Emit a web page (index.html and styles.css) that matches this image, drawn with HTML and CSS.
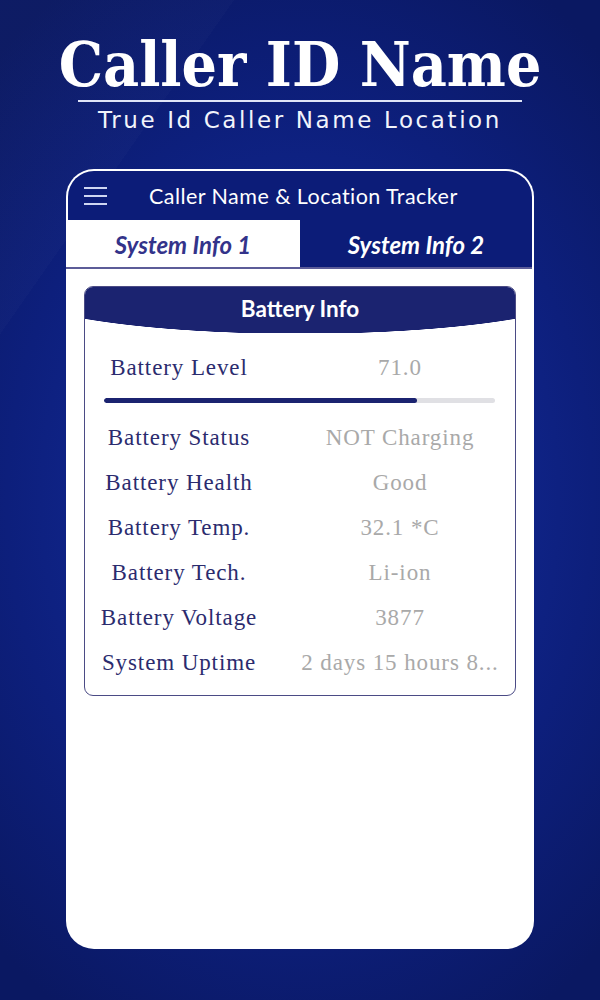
FILE: index.html
```html
<!DOCTYPE html>
<html>
<head>
<meta charset="utf-8">
<link rel="stylesheet" href="styles.css">
</head>
<body>
<div class="screen">
  <header class="hero">
    <h1 class="hero-title">Caller ID Name</h1>
    <div class="hero-rule"></div>
    <p class="hero-sub">True Id Caller Name Location</p>
  </header>

  <section class="card">
    <div class="app-bar">
      <span class="menu-icon"><span></span><span></span><span></span></span>
      <span class="app-title">Caller Name &amp; Location Tracker</span>
    </div>
    <div class="tabs">
      <div class="tab tab-active">System Info 1</div>
      <div class="tab tab-dark">System Info 2</div>
    </div>

    <div class="info-box">
      <div class="info-head">Battery Info</div>
      <div class="row row-first">
        <span class="label">Battery Level</span>
        <span class="value">71.0</span>
      </div>
      <div class="bar"><div class="bar-fill" style="width:80%"></div></div>
      <div class="row"><span class="label">Battery Status</span><span class="value">NOT Charging</span></div>
      <div class="row"><span class="label">Battery Health</span><span class="value">Good</span></div>
      <div class="row"><span class="label">Battery Temp.</span><span class="value">32.1 *C</span></div>
      <div class="row"><span class="label">Battery Tech.</span><span class="value">Li-ion</span></div>
      <div class="row"><span class="label">Battery Voltage</span><span class="value">3877</span></div>
      <div class="row"><span class="label">System Uptime</span><span class="value">2 days 15 hours 8...</span></div>
    </div>
  </section>
</div>
</body>
</html>
```

FILE: styles.css
```css
html, body {
  margin: 0;
  padding: 0;
}
body {
  width: 600px;
  height: 1000px;
  overflow: hidden;
  background:
    linear-gradient(125deg, rgba(255,255,255,0.015) 0 18%, transparent 18% 100%),
    radial-gradient(ellipse 75% 60% at 50% 50%, #16309e 0%, #112790 35%, #0d1f7c 65%, #0a1862 100%);
  font-family: "Lato", "Noto Sans", sans-serif;
}
.screen {
  width: 600px;
  height: 1000px;
  display: flex;
  flex-direction: column;
  align-items: center;
}
.hero {
  display: flex;
  flex-direction: column;
  align-items: center;
  padding-top: 32px;
}
.hero-title {
  margin: 0;
  font-family: "DejaVu Serif Condensed", "DejaVu Serif", serif;
  font-stretch: condensed;
  font-weight: bold;
  font-size: 62px;
  line-height: 66px;
  color: #ffffff;
}
.hero-rule {
  width: 444px;
  height: 2px;
  background: #dfe4f7;
  margin-top: 2px;
}
.hero-sub {
  margin: 4px 0 0;
  font-family: "DejaVu Sans", sans-serif;
  font-size: 23px;
  line-height: 28px;
  letter-spacing: 2.6px;
  color: #f2f4fb;
}
.card {
  margin-top: 35px;
  width: 464px;
  height: 778px;
  padding: 2px 2px 0;
  background: #ffffff;
  border-radius: 28px;
  display: flex;
  flex-direction: column;
}
.app-bar {
  height: 49px;
  background: #0c1c78;
  border-radius: 26px 26px 0 0;
  display: flex;
  align-items: center;
  padding-left: 16px;
}
.menu-icon {
  display: flex;
  flex-direction: column;
  gap: 6px;
  width: 23px;
}
.menu-icon span {
  display: block;
  height: 2px;
  background: #cfd6f2;
}
.app-title {
  margin-left: 42px;
  font-family: "Lato", sans-serif;
  font-size: 21.5px;
  color: #ffffff;
  letter-spacing: 0.45px;
}
.tabs {
  display: grid;
  grid-template-columns: 234px 1fr;
  height: 47px;
  border-bottom: 2px solid #5c5c98;
  margin-left: -2px;
}
.tab {
  display: flex;
  align-items: center;
  justify-content: center;
  font-family: "Lato", sans-serif;
  font-style: italic;
  font-weight: bold;
  font-size: 24px;
  padding-top: 1px;
}
.tab-active {
  color: #33338a;
  background: #ffffff;
}
.tab-dark {
  color: #ffffff;
  background: #0c1c78;
}
.info-box {
  margin: 17px 16px 0;
  border: 1.5px solid #4b4b85;
  border-radius: 9px;
  overflow: hidden;
  padding-bottom: 10px;
}
.info-head {
  height: 46px;
  line-height: 44px;
  text-align: center;
  color: #ffffff;
  font-family: "Lato", sans-serif;
  font-weight: bold;
  font-size: 22.5px;
  background: radial-gradient(ellipse 295px 47px at 50% 0, #1b2370 99%, rgba(27,35,112,0) 100%);
}
.row {
  display: grid;
  grid-template-columns: 188px 1fr;
  column-gap: 12px;
  height: 45px;
  align-items: center;
  font-family: "Liberation Serif", "DejaVu Serif", serif;
  font-size: 23px;
  letter-spacing: 0.9px;
}
.row-first {
  margin-top: 12px;
}
.label {
  text-align: center;
  color: #2b2b6e;
}
.value {
  text-align: center;
  color: #a9a9a9;
  white-space: nowrap;
}
.bar {
  margin: 8px 20px 12px 19px;
  height: 5px;
  border-radius: 3px;
  background: #e0e0e4;
  overflow: hidden;
}
.bar-fill {
  height: 100%;
  border-radius: 3px;
  background: #1b2370;
}
```
